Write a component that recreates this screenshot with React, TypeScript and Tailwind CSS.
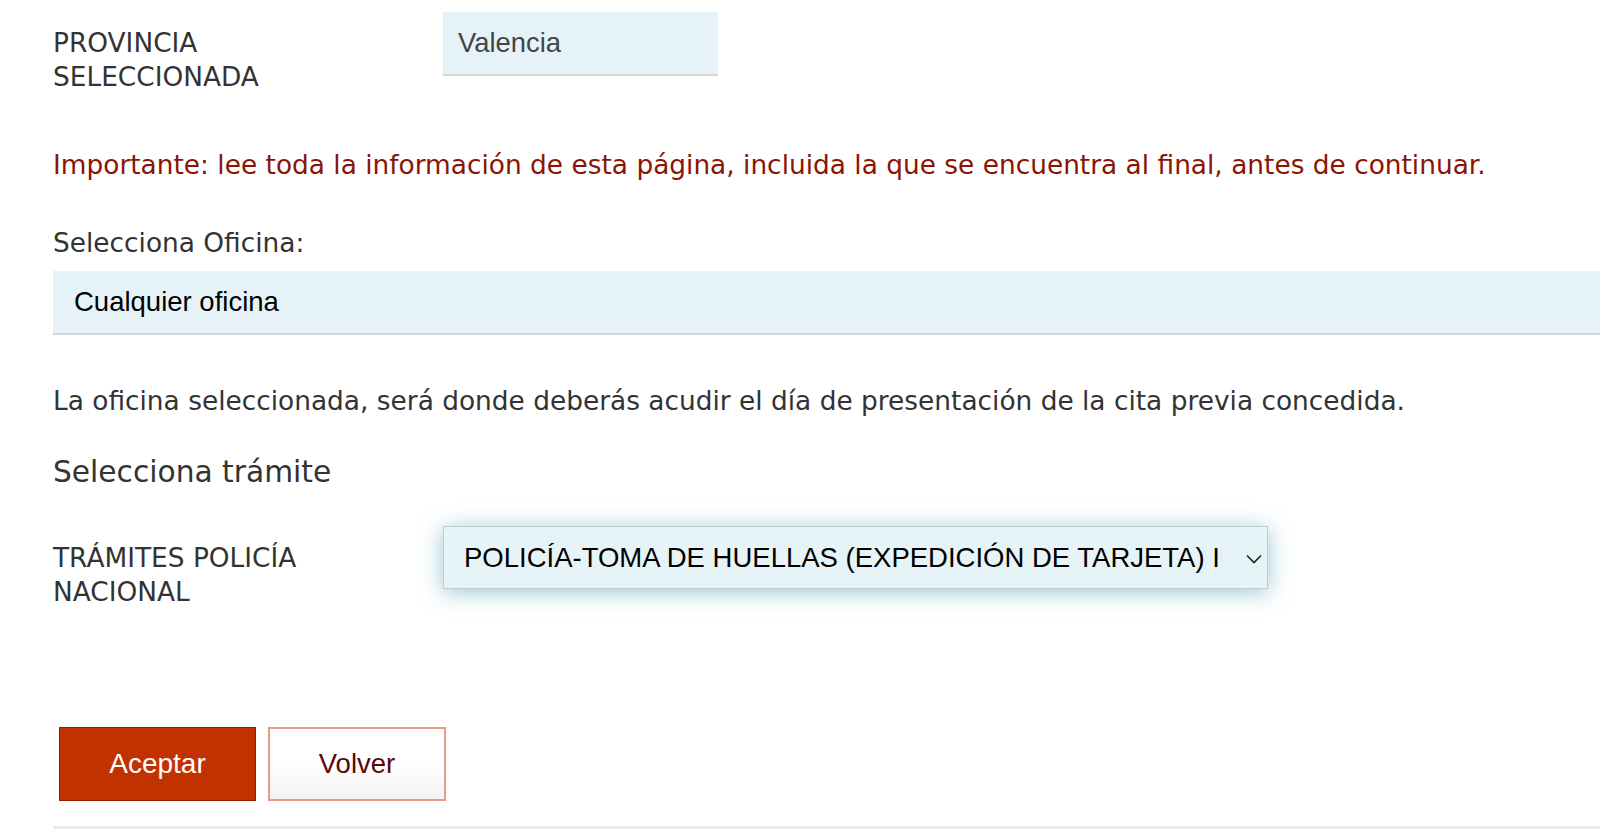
import React from "react";

export default function App() {
  return (
    <div className="w-[1600px] h-[829px] overflow-hidden bg-white font-['DejaVu_Sans','Noto_Sans',sans-serif] text-[#333333]">
      <div className="pl-[53px] flex flex-col">
        {/* Provincia row */}
        <div className="flex items-start mt-[12px]">
          <div className="w-[390px] mt-[14.25px] text-[26.4px] leading-[33.5px]">
            PROVINCIA
            <br />
            SELECCIONADA
          </div>
          <div className="w-[275px] h-[63.5px] bg-[#e5f3f8] border-b-2 border-[#d6d6d6] flex items-center pl-[15px] font-['Liberation_Sans',Arial,sans-serif] text-[27.4px] text-[#444444]">
            Valencia
          </div>
        </div>

        <p className="mt-[54.5px] text-[26.4px] leading-[34px] text-[#8a1505]">
          Importante: lee toda la información de esta página, incluida la que se encuentra al final, antes de continuar.
        </p>

        <p className="mt-[44px] text-[26.4px] leading-[34px]">Selecciona Oficina:</p>

        <div className="mt-[11px] h-[64px] bg-[#e5f3f8] border-b-2 border-[#d6d6d6] flex items-center pl-[21px] font-['Liberation_Sans',Arial,sans-serif] text-[27.5px] text-black">
          Cualquier oficina
        </div>

        <p className="mt-[49px] text-[26.4px] leading-[34px]">
          La oficina seleccionada, será donde deberás acudir el día de presentación de la cita previa concedida.
        </p>

        <h3 className="mt-[34.5px] text-[29.7px] leading-[40px]">Selecciona trámite</h3>

        {/* Tramites row */}
        <div className="flex items-start mt-[34px]">
          <div className="w-[390px] mt-[14.75px] text-[26.4px] leading-[33.5px]">
            TRÁMITES POLICÍA
            <br />
            NACIONAL
          </div>
          <div className="relative w-[825px] h-[63px] bg-[#e6f3f7] border border-[#c4cbce] shadow-[0_3px_22px_rgba(80,160,185,0.6)] flex items-center pl-[20px] font-['Liberation_Sans',Arial,sans-serif] text-[27.5px] text-black">
            <span className="w-[758px] overflow-hidden whitespace-nowrap">
              POLICÍA-TOMA DE HUELLAS (EXPEDICIÓN DE TARJETA) INICIAL
            </span>
            <svg
              className="absolute right-[5px] top-[27px]"
              width="16"
              height="10"
              viewBox="0 0 16 10"
              fill="none"
            >
              <path d="M1 1.5 L8 8.5 L15 1.5" stroke="#222" strokeWidth="1.6" />
            </svg>
          </div>
        </div>

        {/* Buttons */}
        <div className="flex mt-[118.75px] ml-[6px] gap-[12px] font-['Liberation_Sans',Arial,sans-serif]">
          <button className="w-[197px] h-[74px] bg-[#c23100] border border-[#9e1a00] text-white text-[28px]">
            Aceptar
          </button>
          <button className="w-[178px] h-[74px] bg-gradient-to-b from-white via-white to-[#f2f2f2] border-2 border-[#ec9a80] text-[#5a0808] text-[27.5px]">
            Volver
          </button>
        </div>

        <div className="mt-[25px] h-[6px] bg-[#ececec]" />
      </div>
    </div>
  );
}
